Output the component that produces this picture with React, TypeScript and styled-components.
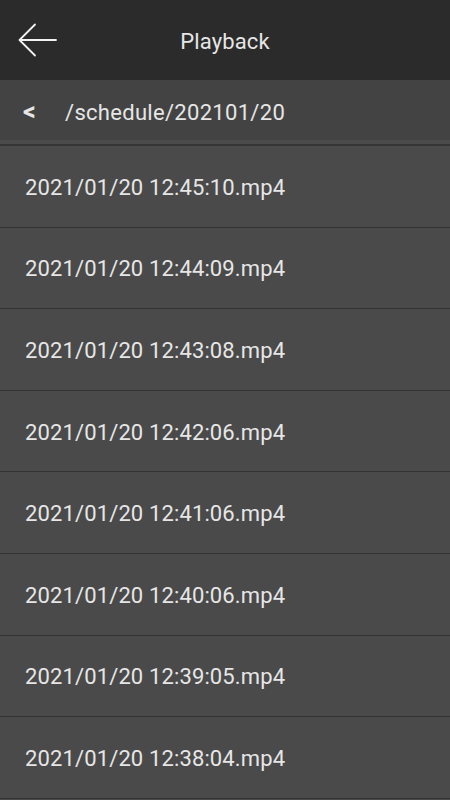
import React from "react";
import styled, { createGlobalStyle } from "styled-components";

const GlobalStyle = createGlobalStyle`
  html, body { margin: 0; padding: 0; background: #4a4a4a; }
  body { font-family: Roboto, "Noto Sans", sans-serif; }
  * { box-sizing: border-box; }
`;

const Screen = styled.div`
  width: 450px;
  height: 800px;
  overflow: hidden;
  display: flex;
  flex-direction: column;
  background: #4a4a4a;
`;

const TopBar = styled.header`
  height: 80px;
  flex: none;
  background: #2b2b2b;
  display: grid;
  grid-template-columns: 80px 1fr 80px;
  align-items: center;
`;

const BackButton = styled.button`
  background: none;
  border: none;
  padding: 0 0 0 18px;
  height: 80px;
  display: flex;
  align-items: center;
  cursor: pointer;
`;

const Title = styled.h1`
  margin: 0;
  text-align: center;
  color: #e6e6e6;
  font-size: 22px;
  font-weight: 400;
  line-height: 1;
  padding-top: 4px;
  letter-spacing: 0.15px;
`;

const PathBar = styled.div`
  box-sizing: content-box;
  height: 56px;
  flex: none;
  background: #434343;
  display: flex;
  align-items: center;
  gap: 28px;
  padding-left: 23px;
  padding-top: 4px;
  color: #e6e6e6;
  font-size: 22px;
  border-bottom: 4px solid #4b4b4b;
  box-shadow: 0 2px 0 #353535;
  margin-bottom: 2px;
`;

const UpChevron = styled.span`
  font-size: 25px;
  font-weight: 700;
  padding-bottom: 2px;
  width: 14px;
`;

const PathText = styled.span`
  letter-spacing: 0.3px;
`;

const List = styled.ul`
  list-style: none;
  margin: 0;
  padding: 0;
  flex: 1;
`;

const Row = styled.li`
  height: 81.6px;
  flex: none;
  display: flex;
  align-items: center;
  padding-left: 25px;
  padding-top: 2px;
  color: #e6e6e6;
  font-size: 22px;
  letter-spacing: 0.13px;
  border-bottom: 1px solid #333333;
`;

const files = [
  "2021/01/20 12:45:10.mp4",
  "2021/01/20 12:44:09.mp4",
  "2021/01/20 12:43:08.mp4",
  "2021/01/20 12:42:06.mp4",
  "2021/01/20 12:41:06.mp4",
  "2021/01/20 12:40:06.mp4",
  "2021/01/20 12:39:05.mp4",
  "2021/01/20 12:38:04.mp4",
];

const BackArrow = () => (
  <svg width="40" height="36" viewBox="0 0 40 36" fill="none">
    <path
      d="M1.5 18 H38 M17 2.5 L1.5 18 L17 33.5"
      stroke="#f2f2f2"
      strokeWidth="1.8"
      strokeLinecap="round"
      strokeLinejoin="round"
    />
  </svg>
);

export default function App() {
  return (
    <>
      <GlobalStyle />
      <Screen>
        <TopBar>
          <BackButton aria-label="Back">
            <BackArrow />
          </BackButton>
          <Title>Playback</Title>
          <div />
        </TopBar>
        <PathBar>
          <UpChevron>&lt;</UpChevron>
          <PathText>/schedule/202101/20</PathText>
        </PathBar>
        <List>
          {files.map((f) => (
            <Row key={f}>{f}</Row>
          ))}
        </List>
      </Screen>
    </>
  );
}
